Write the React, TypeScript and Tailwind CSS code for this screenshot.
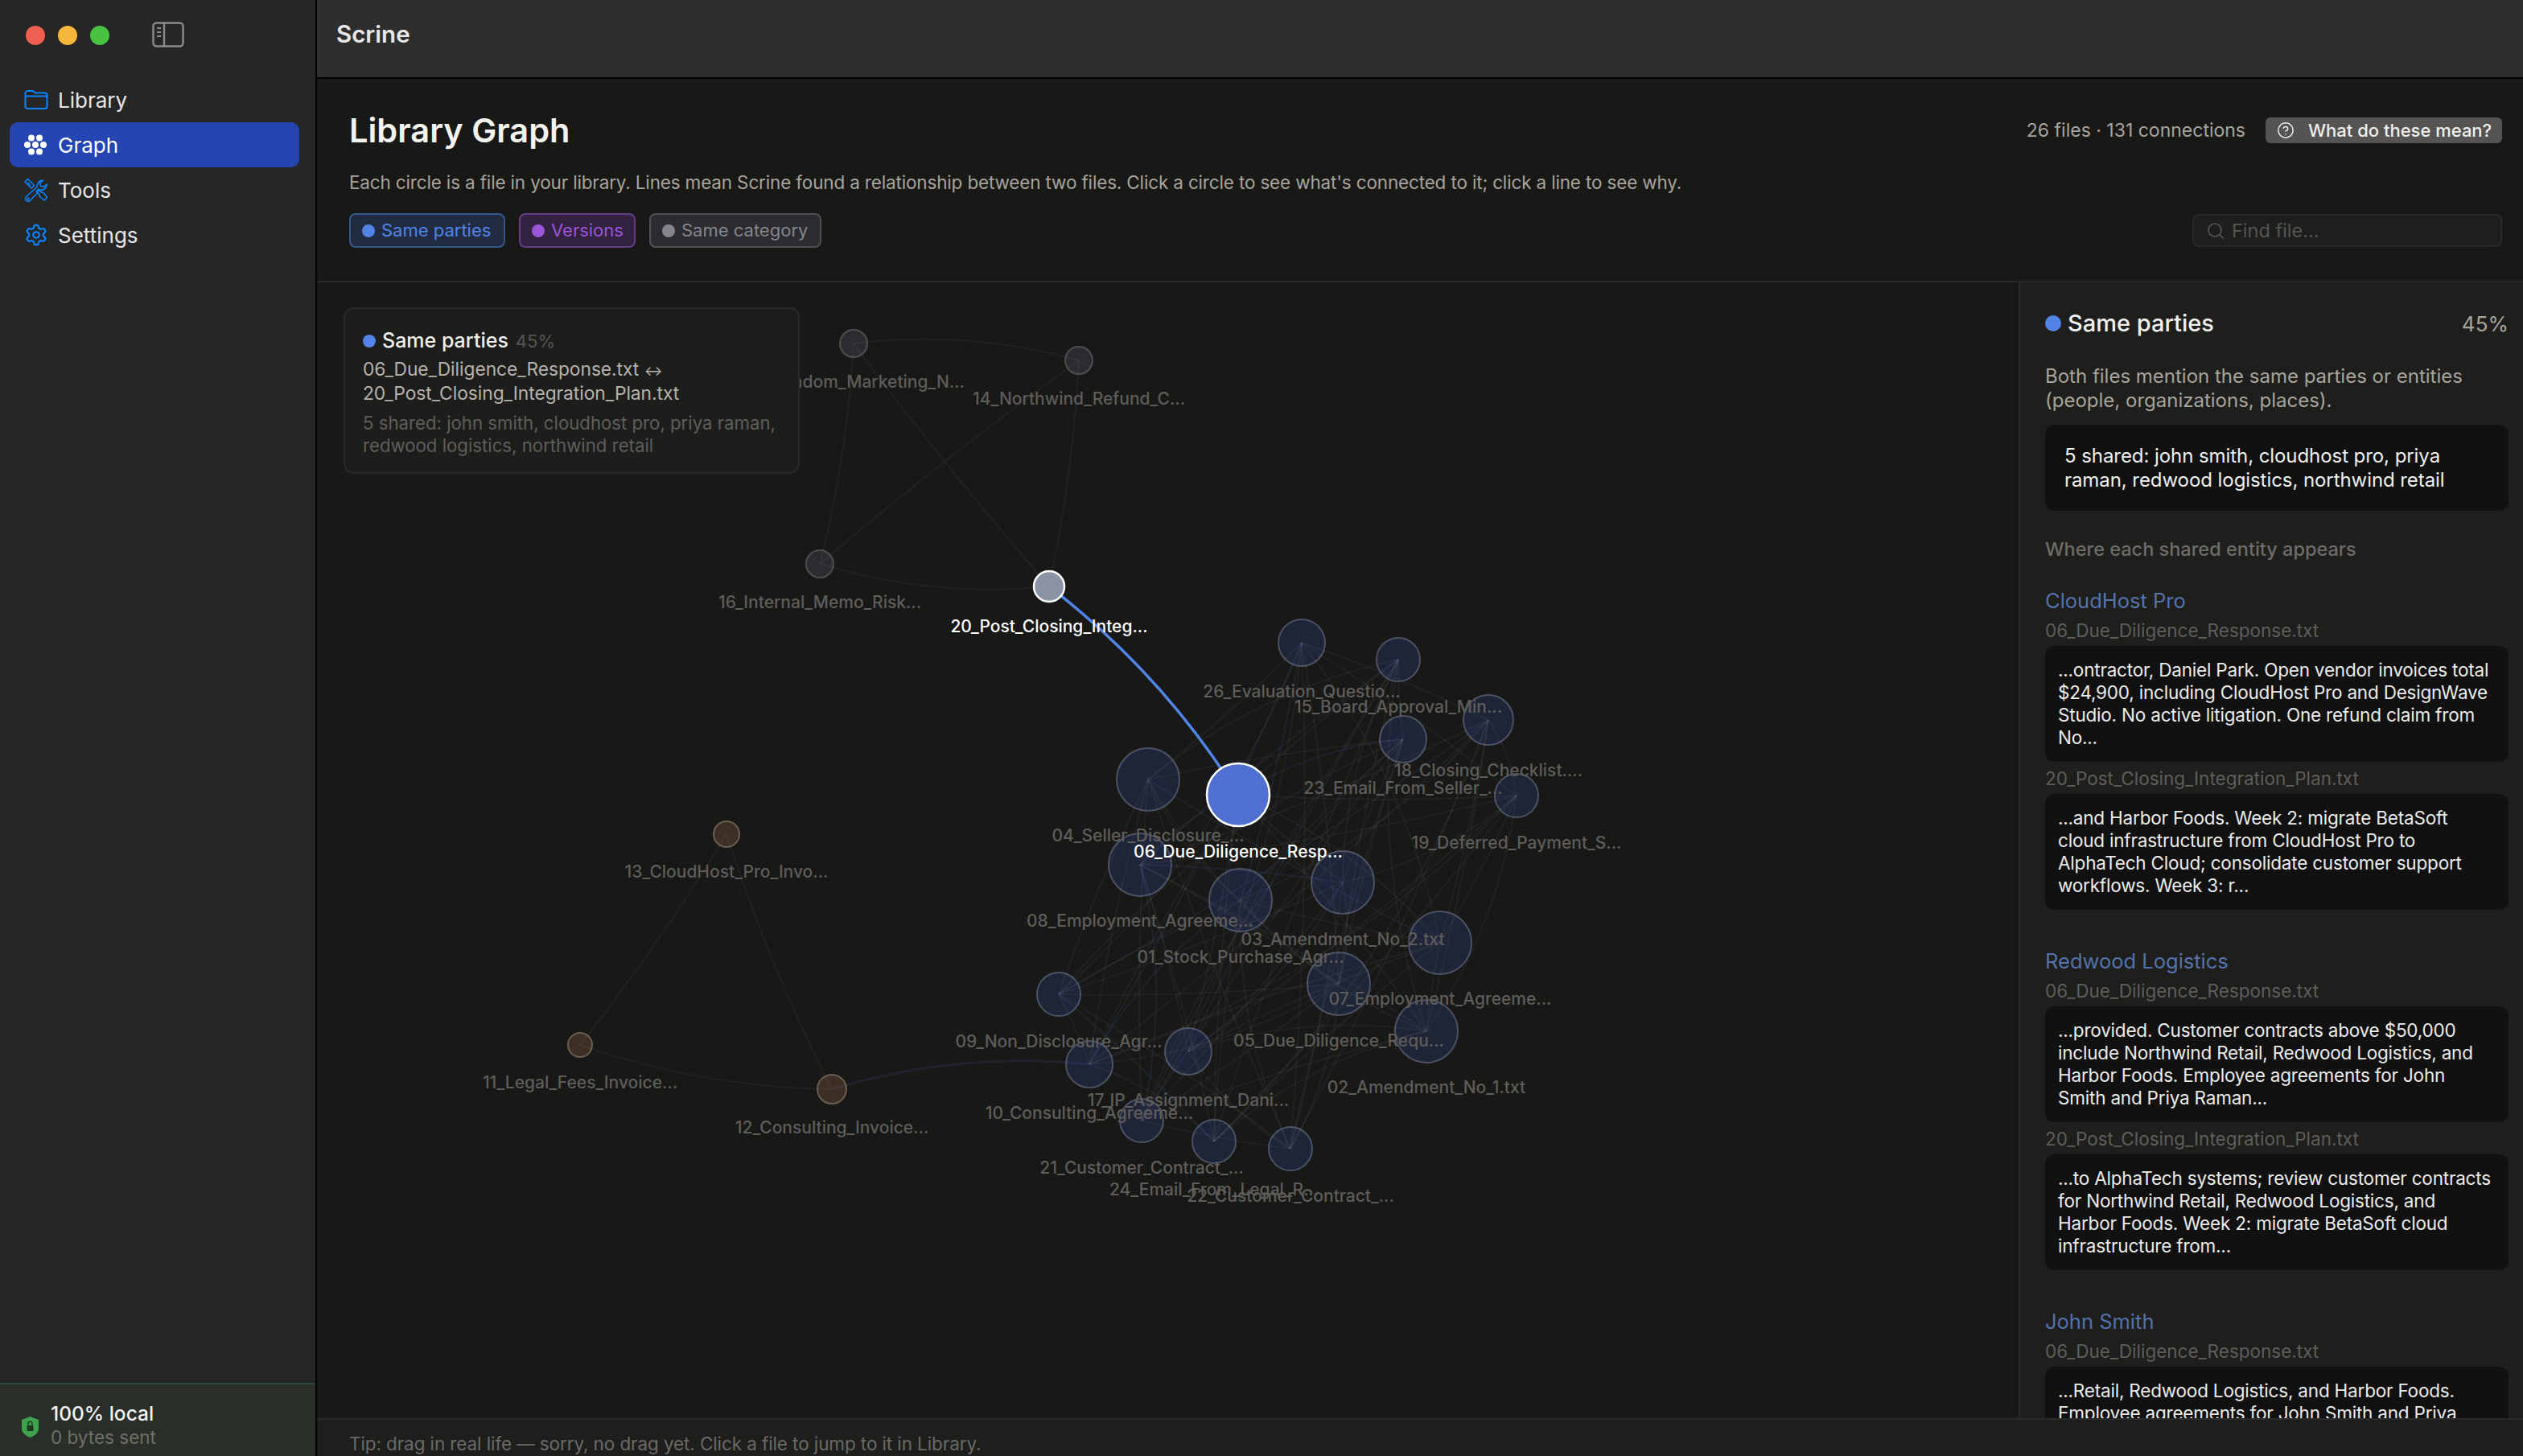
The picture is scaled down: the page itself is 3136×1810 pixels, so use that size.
import { HelpCircle, Search, Settings } from "lucide-react";

type GraphNode = { id: string; x: number; y: number; r: number; label: string; ly: number; kind: "blue" | "brown" | "gray" | "active" | "end" };

const nodes: GraphNode[] = [
  { id: "25", x: 1061, y: 427, r: 18, label: "25_Random_Marketing_N...", ly: 474, kind: "gray" },
  { id: "14", x: 1341, y: 448, r: 18, label: "14_Northwind_Refund_C...", ly: 495, kind: "gray" },
  { id: "16", x: 1019, y: 701, r: 18, label: "16_Internal_Memo_Risk...", ly: 748, kind: "gray" },
  { id: "20", x: 1304, y: 729, r: 20, label: "20_Post_Closing_Integ...", ly: 778, kind: "end" },
  { id: "26", x: 1618, y: 799, r: 30, label: "26_Evaluation_Questio...", ly: 859, kind: "blue" },
  { id: "15", x: 1738, y: 820, r: 28, label: "15_Board_Approval_Min...", ly: 878, kind: "blue" },
  { id: "18", x: 1850, y: 895, r: 32, label: "18_Closing_Checklist....", ly: 957, kind: "blue" },
  { id: "23", x: 1744, y: 919, r: 30, label: "23_Email_From_Seller_...", ly: 979, kind: "blue" },
  { id: "19", x: 1885, y: 989, r: 28, label: "19_Deferred_Payment_S...", ly: 1047, kind: "blue" },
  { id: "04", x: 1427, y: 969, r: 40, label: "04_Seller_Disclosure_...", ly: 1038, kind: "blue" },
  { id: "08", x: 1417, y: 1075, r: 40, label: "08_Employment_Agreeme...", ly: 1144, kind: "blue" },
  { id: "01", x: 1542, y: 1119, r: 40, label: "01_Stock_Purchase_Agr...", ly: 1189, kind: "blue" },
  { id: "03", x: 1669, y: 1097, r: 40, label: "03_Amendment_No_2.txt", ly: 1167, kind: "blue" },
  { id: "07", x: 1790, y: 1172, r: 40, label: "07_Employment_Agreeme...", ly: 1241, kind: "blue" },
  { id: "05", x: 1664, y: 1223, r: 40, label: "05_Due_Diligence_Requ...", ly: 1293, kind: "blue" },
  { id: "02", x: 1773, y: 1282, r: 40, label: "02_Amendment_No_1.txt", ly: 1351, kind: "blue" },
  { id: "09", x: 1316, y: 1236, r: 28, label: "09_Non_Disclosure_Agr...", ly: 1294, kind: "blue" },
  { id: "17", x: 1477, y: 1307, r: 30, label: "17_IP_Assignment_Dani...", ly: 1367, kind: "blue" },
  { id: "10", x: 1354, y: 1323, r: 30, label: "10_Consulting_Agreeme...", ly: 1383, kind: "blue" },
  { id: "21", x: 1419, y: 1393, r: 28, label: "21_Customer_Contract_...", ly: 1451, kind: "blue" },
  { id: "24", x: 1509, y: 1419, r: 28, label: "24_Email_From_Legal_R...", ly: 1478, kind: "blue" },
  { id: "22", x: 1604, y: 1428, r: 28, label: "22_Customer_Contract_...", ly: 1486, kind: "blue" },
  { id: "13", x: 903, y: 1037, r: 17, label: "13_CloudHost_Pro_Invo...", ly: 1083, kind: "brown" },
  { id: "11", x: 721, y: 1299, r: 16, label: "11_Legal_Fees_Invoice...", ly: 1345, kind: "brown" },
  { id: "12", x: 1034, y: 1354, r: 19, label: "12_Consulting_Invoice...", ly: 1401, kind: "brown" },
  { id: "06", x: 1539, y: 988, r: 40, label: "06_Due_Diligence_Resp...", ly: 1058, kind: "active" },
];

const byId = Object.fromEntries(nodes.map((n) => [n.id, n]));
const cluster = nodes.filter((n) => n.kind === "blue" || n.kind === "active");

// bend is how far the curve's control point sits off the straight line, as a share of its length
const curve = (a: GraphNode, b: GraphNode, bend: number) => {
  const mx = (a.x + b.x) / 2;
  const my = (a.y + b.y) / 2;
  const cx = mx - (b.y - a.y) * bend;
  const cy = my + (b.x - a.x) * bend;
  return `M${a.x} ${a.y}Q${cx} ${cy} ${b.x} ${b.y}`;
};

const outerEdges: [string, string, number][] = [
  ["25", "14", -0.1],
  ["25", "16", -0.05],
  ["25", "20", 0.02],
  ["14", "16", 0.02],
  ["14", "20", -0.04],
  ["16", "20", 0.1],
  ["13", "11", -0.03],
  ["13", "12", 0.04],
  ["11", "12", 0.08],
];

const clusterEdges: { a: GraphNode; b: GraphNode; bend: number; blue: boolean }[] = [];
cluster.forEach((a, i) => {
  cluster.forEach((b, j) => {
    if (j <= i || (i * 7 + j * 13) % 5 > 2) return;
    clusterEdges.push({ a, b, bend: ((i + j) % 3 === 0 ? 0.12 : 0.03) * (i % 2 ? 1 : -1), blue: (i + j) % 7 === 0 });
  });
});

const fills = {
  blue: "fill-[#1f2538] stroke-[#4c5164]",
  brown: "fill-[#3e2f24] stroke-[#6b5d50]",
  gray: "fill-[#2a2c30] stroke-[#4c4e52]",
  active: "fill-[#4f70d0] stroke-white",
  end: "fill-[#8a94a6] stroke-white",
};

const FolderIcon = () => (
  <svg width="30" height="24" viewBox="0 0 30 24" fill="none" stroke="#0a84ff" strokeWidth="2" strokeLinejoin="round">
    <path d="M1.500 4a3 3 0 0 1 3-3h5.500a3 3 0 0 1 2 .8L14 3.500h11.500a3 3 0 0 1 3 3V20a3 3 0 0 1-3 3h-21a3 3 0 0 1-3-3Z" />
    <path d="M1.500 7.500h27" />
  </svg>
);

const GraphIcon = () => (
  <svg width="28" height="28" viewBox="0 0 28 28" className="fill-white">
    <circle cx="14" cy="14" r="4" />
    <circle cx="9" cy="5.500" r="4" />
    <circle cx="19" cy="5.500" r="4" />
    <circle cx="4" cy="14" r="4" />
    <circle cx="24" cy="14" r="4" />
    <circle cx="9" cy="22.500" r="4" />
    <circle cx="19" cy="22.500" r="4" />
  </svg>
);

const ToolsIcon = () => (
  <svg width="30" height="30" viewBox="0 0 30 30" fill="none" stroke="#0a84ff" strokeWidth="1.600" strokeLinejoin="round" strokeLinecap="round">
    <path d="M1 5 4.500 1.500 12.500 9.500 9 13Z" />
    <path d="M4.500 6 7.500 9" strokeWidth="1.200" />
    <path d="M15 17 18 14 21.500 18 24 18.500 28.500 24.500 25 28 19.500 23.500 19 21Z" />
    <path d="M16.500 11 2.500 23.500a3.500 3.500 0 0 0 4.800 5L20 15c3.600 1 8-2 8.200-7l-4 3.200-3.600-1-1-3.600L23.500 3C18.500 3 15.500 7.500 16.500 11Z" />
    <circle cx="5.300" cy="25.800" r="1" strokeWidth="1.200" />
  </svg>
);

const NavItem = ({ label, icon, active }: { label: string; icon: React.ReactNode; active?: boolean }) => (
  <div className={`flex h-[56px] items-center rounded-[10px] pl-[18px] ${active ? "bg-[#2546b2] text-white" : "text-[#e6e6e6]"}`}>
    <span className="flex w-[42px] shrink-0 items-center">{icon}</span>
    <span className="text-[26px]">{label}</span>
  </div>
);

const Excerpt = ({ file, children }: { file: string; children: React.ReactNode }) => (
  <div>
    <div className="h-[36px] text-[22.5px] leading-[34px] text-[#5f5e5b]">{file}</div>
    <div className="rounded-[12px] bg-[#111111] p-[16px] text-[22.5px] leading-[28px] tracking-[-0.2px] text-[#ececea]">{children}</div>
  </div>
);

const Entity = ({ name, children }: { name: string; children: React.ReactNode }) => (
  <div className="flex h-[448px] flex-col">
    <div className="h-[39px] text-[25.5px] leading-[38px] text-[#5472ac]">{name}</div>
    <div className="flex flex-col gap-[4px]">{children}</div>
  </div>
);

export default function App() {
  return (
    <div className="flex h-[1810px] w-[3136px] overflow-hidden bg-[#181817] font-['Inter','Liberation_Sans',sans-serif]">
      <aside className="flex w-[394px] shrink-0 flex-col border-r-2 border-black bg-[#262626]">
        <div className="flex h-[96px] shrink-0 items-start pl-[32px] pt-[32px]">
          <span className="h-[24px] w-[24px] rounded-full bg-[#ef5f53]" />
          <span className="ml-[16px] h-[24px] w-[24px] rounded-full bg-[#f5b83d]" />
          <span className="ml-[16px] h-[24px] w-[24px] rounded-full bg-[#4bc143]" />
          <svg width="40" height="32" viewBox="0 0 40 32" fill="none" stroke="#8a8a8a" strokeWidth="2.400" className="ml-[53px] -mt-[5px]">
            <rect x="1.500" y="1.500" width="37" height="29" rx="4" />
            <path d="M15 1.500v29" />
            <path d="M6 8h5M6 13h5M6 18h5" strokeWidth="2" />
          </svg>
        </div>
        <nav className="flex flex-col pl-[12px] pr-[20px]">
          <NavItem label="Library" icon={<FolderIcon />} />
          <NavItem label="Graph" active icon={<GraphIcon />} />
          <NavItem label="Tools" icon={<ToolsIcon />} />
          <NavItem label="Settings" icon={<Settings size={30} color="#0a84ff" strokeWidth={1.8} />} />
        </nav>
        <div className="mt-auto flex h-[91px] items-center border-t-2 border-[#2f4a33] bg-[#292e29] pl-[27px]">
          <svg width="21" height="26" viewBox="0 0 21 26" className="mt-[16px] shrink-0">
            <path d="M10.500 0 21 4v11c0 5-4.500 8.500-10.500 11C4.500 23.500 0 20 0 15V4Z" fill="#3fa34d" />
            <rect x="6.500" y="11" width="8" height="7" rx="1" fill="#1f3a24" />
            <path d="M8 11V8.500a2.500 2.500 0 0 1 5 0V11" fill="none" stroke="#1f3a24" strokeWidth="1.500" />
          </svg>
          <div className="ml-[15px] mt-[12px]">
            <div className="text-[24.5px] font-medium leading-[30px] text-[#f4f4f4]">100% local</div>
            <div className="text-[22.5px] leading-[30px] text-[#6f6e6a]">0 bytes sent</div>
          </div>
        </div>
      </aside>

      <main className="flex min-w-0 flex-1 flex-col">
        <div className="flex h-[98px] shrink-0 items-center border-b-2 border-black bg-[#2e2e2e] pb-[11px] pl-[24px]">
          <span className="text-[29.5px] font-semibold text-[#e8e8e8]">Scrine</span>
        </div>

        <header className="relative h-[253px] shrink-0 border-b-2 border-[#2a2a2a] px-[40px] pt-[38px]">
          <div className="flex items-center justify-between">
            <h1 className="text-[41.5px] font-semibold leading-[52px] text-[#f4f2ee]">Library Graph</h1>
            <div className="-mr-[14px] flex items-center gap-[25px] text-[23px] text-[#a8a49c]">
              <span>26 files · 131 connections</span>
              <button className="flex h-[32px] w-[294px] items-center rounded-[6px] bg-[#555452] pl-[14px] text-[22px] font-medium text-[#f0f0ee]">
                <HelpCircle size={22} strokeWidth={1.6} />
                <span className="ml-[17px]">What do these mean?</span>
              </button>
            </div>
          </div>
          <p className="mt-[24px] text-[22.5px] leading-[30px] tracking-[-0.16px] text-[#a8a49c]">
            Each circle is a file in your library. Lines mean Scrine found a relationship between two files. Click a circle to see what's connected to it; click a line to see why.
          </p>
          <div className="mt-[23px] flex items-center justify-between">
            <div className="flex gap-[17px] text-[22px]">
              <span className="flex h-[43px] w-[194px] items-center rounded-[8px] border-2 border-[#37588f] bg-[#212c43] pl-[14px] text-[#5184e6]">
                <i className="mr-[8px] h-[16px] w-[16px] rounded-full bg-[#5184e6]" />Same parties
              </span>
              <span className="flex h-[43px] w-[145px] items-center rounded-[8px] border-2 border-[#653d86] bg-[#33223f] pl-[14px] text-[#9a55d8]">
                <i className="mr-[8px] h-[16px] w-[16px] rounded-full bg-[#9a55d8]" />Versions
              </span>
              <span className="flex h-[43px] w-[214px] items-center rounded-[8px] border-2 border-[#505055] bg-[#2c2b2f] pl-[14px] text-[#85858e]">
                <i className="mr-[8px] h-[16px] w-[16px] rounded-full bg-[#85858e]" />Same category
              </span>
            </div>
            <div className="-mr-[14px] flex h-[41px] w-[385px] items-center rounded-[8px] border-2 border-[#2a2a2a] bg-[#1e1e1d] pl-[15px] text-[23.5px] text-[#555553]">
              <Search size={24} strokeWidth={1.7} />
              <span className="ml-[8px]">Find file...</span>
            </div>
          </div>
        </header>

        <div className="flex min-h-0 flex-1">
          <div className="relative min-w-0 flex-1 overflow-hidden">
            <svg width="2115" height="1412" viewBox="394 351 2115 1412" className="block">
              {nodes.filter((n) => n.kind !== "active" && n.kind !== "end").map((n) => (
                <circle key={n.id} cx={n.x} cy={n.y} r={n.r - 1} strokeWidth="2" className={fills[n.kind]} />
              ))}
              <g fill="none" strokeWidth="2">
                {outerEdges.map(([a, b, bend]) => (
                  <path key={a + b} d={curve(byId[a], byId[b], bend)} stroke="#ffffff" strokeOpacity="0.04" />
                ))}
                <path d={curve(byId["12"], byId["10"], -0.1)} stroke="#5b7be0" strokeOpacity="0.11" strokeWidth="3" />
                {clusterEdges.map((e) => (
                  <path key={e.a.id + e.b.id} d={curve(e.a, e.b, e.bend)} stroke={e.blue ? "#5b7be0" : "#ffffff"} strokeOpacity={e.blue ? 0.1 : 0.04} />
                ))}
              </g>
              <path d={curve(byId["20"], byId["06"], -0.09)} fill="none" stroke="#5184e6" strokeWidth="3.500" />
              {nodes.filter((n) => n.kind === "active" || n.kind === "end").map((n) => (
                <circle key={n.id} cx={n.x} cy={n.y} r={n.r - 1} strokeWidth="2.500" className={fills[n.kind]} />
              ))}
              {nodes.map((n) => (
                <text
                  key={n.id}
                  x={n.x}
                  y={n.ly + 7.500}
                  textAnchor="middle"
                  className={`text-[21px] font-medium ${n.kind === "active" || n.kind === "end" ? "fill-white" : "fill-[#5f5d5a]"}`}
                >
                  {n.label}
                </text>
              ))}
            </svg>
            <div className="absolute left-[33px] top-[31px] h-[207px] w-[567px] rounded-[12px] border-2 border-[#282828] bg-[#1d1d1c] px-[22px] pt-[23px]">
              <div className="flex h-[34px] items-center">
                <i className="mr-[8px] h-[16px] w-[16px] rounded-full bg-[#5184e6]" />
                <span className="text-[25px] font-medium text-[#efefed]">Same parties</span>
                <span className="ml-[9px] text-[22px] text-[#555553]">45%</span>
              </div>
              <div className="mt-[4px] text-[22.8px] leading-[28px] tracking-[-0.05px] text-[#b5b2ac]">
                06_Due_Diligence_Response.txt <span className="text-[17px]">↔</span><br />20_Post_Closing_Integration_Plan.txt
              </div>
              <div className="mt-[9px] text-[22.2px] leading-[28px] text-[#5f5e5a]">
                5 shared: john smith, cloudhost pro, priya raman,<br />redwood logistics, northwind retail
              </div>
            </div>
          </div>

          <aside className="h-full w-[627px] shrink-0 overflow-hidden border-l-2 border-[#2b2b2b] bg-[#1e1e1d] pl-[31px] pr-[18px] pt-[32px]">
            <div className="flex h-[38px] items-center">
              <i className="mr-[8px] h-[20px] w-[20px] rounded-full bg-[#5184e6]" />
              <span className="flex-1 text-[29px] font-medium text-[#f0f0ee]">Same parties</span>
              <span className="text-[26px] text-[#a8a49c]">45%</span>
            </div>
            <p className="mt-[32px] text-[24px] leading-[30px] text-[#a8a49c]">
              Both files mention the same parties or entities (people, organizations, places).
            </p>
            <div className="mt-[15px] h-[107px] rounded-[12px] bg-[#111111] px-[24px] pt-[24px] text-[24px] leading-[30px] tracking-[-0.07px] text-[#f0f0ee]">
              5 shared: john smith, cloudhost pro, priya raman, redwood logistics, northwind retail
            </div>
            <div className="mt-[33px] h-[30px] text-[23.5px] font-medium leading-[30px] text-[#6e6c68]">Where each shared entity appears</div>
            <div className="mt-[30px]">
              <Entity name="CloudHost Pro">
                <Excerpt file="06_Due_Diligence_Response.txt">...ontractor, Daniel Park. Open vendor invoices total $24,900, including CloudHost Pro and DesignWave Studio. No active litigation. One refund claim from No...</Excerpt>
                <Excerpt file="20_Post_Closing_Integration_Plan.txt">...and Harbor Foods. Week 2: migrate BetaSoft cloud infrastructure from CloudHost Pro to AlphaTech Cloud; consolidate customer support workflows. Week 3: r...</Excerpt>
              </Entity>
              <Entity name="Redwood Logistics">
                <Excerpt file="06_Due_Diligence_Response.txt">...provided. Customer contracts above $50,000 include Northwind Retail, Redwood Logistics, and Harbor Foods. Employee agreements for John Smith and Priya Raman...</Excerpt>
                <Excerpt file="20_Post_Closing_Integration_Plan.txt">...to AlphaTech systems; review customer contracts for Northwind Retail, Redwood Logistics, and Harbor Foods. Week 2: migrate BetaSoft cloud infrastructure from...</Excerpt>
              </Entity>
              <Entity name="John Smith">
                <Excerpt file="06_Due_Diligence_Response.txt">...Retail, Redwood Logistics, and Harbor Foods. Employee agreements for John Smith and Priya Raman...</Excerpt>
              </Entity>
            </div>
          </aside>
        </div>

        <footer className="h-[47px] shrink-0 border-t-2 border-[#2a2a2a] bg-[#1e1e1d] pl-[40px] pt-[16px] text-[22.5px] leading-[28px] tracking-[-0.1px] text-[#6b6a66]">
          Tip: drag in real life — sorry, no drag yet. Click a file to jump to it in Library.
        </footer>
      </main>
    </div>
  );
}
